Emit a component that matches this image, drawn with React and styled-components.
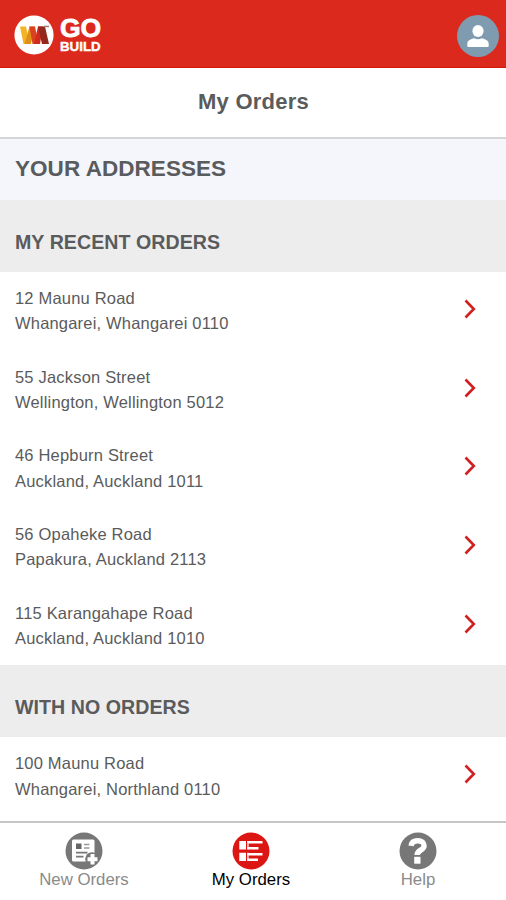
import React from "react";
import styled, { createGlobalStyle } from "styled-components";

const text = {
    title: "My Orders",
    heading: "YOUR ADDRESSES"
};

const sections = [
    {
        title: "MY RECENT ORDERS",
        addresses: [
            { street: "12 Maunu Road", city: "Whangarei, Whangarei 0110" },
            { street: "55 Jackson Street", city: "Wellington, Wellington 5012" },
            { street: "46 Hepburn Street", city: "Auckland, Auckland 1011" },
            { street: "56 Opaheke Road", city: "Papakura, Auckland 2113" },
            { street: "115 Karangahape Road", city: "Auckland, Auckland 1010" }
        ]
    },
    {
        title: "WITH NO ORDERS",
        addresses: [{ street: "100 Maunu Road", city: "Whangarei, Northland 0110" }]
    }
];

const Logo = () => (
    <svg width="40" height="40" viewBox="0 0 40 40">
        <circle cx="20" cy="20" r="19.6" fill="#fff" />
        <path d="M6 11.500h6L15.500 29H9.500z" fill="#f4b325" />
        <path d="M15.500 11.500h5L17 29h-6.500z" fill="#dd8f1a" />
        <path d="M15.500 11.500h5.500L24.500 29h-6z" fill="#d9411f" />
        <path d="M24 11.500h5L26 29h-6z" fill="#d12a1d" />
        <path d="M24 11.500h7L35 29h-7z" fill="#93281f" />
        <path d="M30 10.700h5v1.500h-5z" fill="#a07a76" />
    </svg>
);

const UserIcon = () => (
    <svg width="42" height="42" viewBox="0 0 42 42">
        <circle cx="21" cy="21" r="21" fill="#7f9bb0" />
        <ellipse cx="21" cy="16" rx="5.600" ry="6" fill="#fff" />
        <path d="M10.300 31v-2.300c0-3.600 3.700-4.700 7-5.500 2 1.500 5.400 1.500 7.400 0 3.300.8 7 1.900 7 5.500V31q0 1-1 1H11.300q-1 0-1-1z" fill="#fff" />
    </svg>
);

const Chevron = () => (
    <svg width="12" height="20" viewBox="0 0 12 20">
        <path d="M1.500 1.500 9.800 10 1.500 18.500" fill="none" stroke="#d0201f" strokeWidth="2.600" />
    </svg>
);

const NewOrdersIcon = () => (
    <svg width="38" height="38" viewBox="0 0 38 38">
        <circle cx="19" cy="19" r="18.500" fill="#777" />
        <rect x="7" y="7.500" width="22.500" height="22" rx="1.500" fill="#fff" />
        <rect x="11" y="11.500" width="5.500" height="5.500" fill="#666" />
        <path d="M19 12.500h5.500M19 16h5.500" stroke="#999" strokeWidth="1.600" />
        <path d="M11 20.700h11.500M11 24.700h7.500" stroke="#777" strokeWidth="1.700" />
        <circle cx="27" cy="27" r="6.800" fill="#777" />
        <path d="M27.500 22v10.500M22.500 27.200h10" stroke="#fff" strokeWidth="4" />
    </svg>
);

const MyOrdersIcon = () => (
    <svg width="38" height="38" viewBox="0 0 38 38">
        <circle cx="19" cy="19" r="18.500" fill="#dc1612" />
        <path d="M7.300 9h6.700v8.500H7.300zM7.300 20.800H14V29H7.300z" fill="#fff" />
        <path d="M15.300 9h1.300v8.500h-1.300zM15.300 20.800h1.300V29h-1.300z" fill="#fff" />
        <path d="M15.300 10.300h15.200M15.300 16.200h11.200M15.300 22.200h15.200M15.300 27.700h10.700" stroke="#fff" strokeWidth="2.600" />
    </svg>
);

const HelpIcon = () => (
    <svg width="38" height="38" viewBox="0 0 38 38">
        <circle cx="19" cy="19" r="18.500" fill="#777" />
        <path d="M12 13.800C12.600 10 15 8.800 18.800 8.800c4 0 6.300 2 6.300 4.900 0 4.600-7 4.300-7 9.300" fill="none" stroke="#fff" strokeWidth="5.400" />
        <path d="M15.200 24.800h6.300v6.900h-6.300z" fill="#fff" />
    </svg>
);

const tabs = [
    { label: "New Orders", Icon: NewOrdersIcon },
    { label: "My Orders", Icon: MyOrdersIcon, active: true },
    { label: "Help", Icon: HelpIcon }
];

const App = () => (
    <Page>
        <GlobalStyle />
        <Header>
            <Brand>
                <Logo />
                <BrandName>
                    <BrandTop>GO</BrandTop>
                    <BrandBottom>BUILD</BrandBottom>
                </BrandName>
            </Brand>
            <UserIcon />
        </Header>
        <Title>{text.title}</Title>
        <Content>
            <Heading>{text.heading}</Heading>
            {sections.map(section => (
                <section key={section.title}>
                    <SectionTitle>{section.title}</SectionTitle>
                    {section.addresses.map(address => (
                        <AddressRow key={address.street}>
                            <div>
                                <AddressLine>{address.street}</AddressLine>
                                <AddressLine>{address.city}</AddressLine>
                            </div>
                            <RowArrow>
                                <Chevron />
                            </RowArrow>
                        </AddressRow>
                    ))}
                </section>
            ))}
        </Content>
        <TabBar>
            {tabs.map(({ label, Icon, active }) => (
                <Tab key={label} $active={active}>
                    <Icon />
                    <span>{label}</span>
                </Tab>
            ))}
        </TabBar>
    </Page>
);

const GlobalStyle = createGlobalStyle`
    * {
        box-sizing: border-box;
    }

    body {
        margin: 0;
        background: #fff;
        font-family: "Liberation Sans", Arial, sans-serif;
    }

    svg {
        display: block;
        flex-shrink: 0;
    }
`;

const Page = styled.div`
    display: flex;
    flex-direction: column;
    height: 100vh;
    overflow: hidden;
    color: #5a5b5c;
`;

const Header = styled.header`
    display: flex;
    flex-shrink: 0;
    align-items: center;
    justify-content: space-between;
    height: 68px;
    padding: 4px 7px 0 14px;
    border-bottom: 1px solid #d3170f;
    background: #db291e;
`;

const Brand = styled.div`
    display: flex;
    align-items: center;
    gap: 6px;
    padding-bottom: 1px;
`;

const BrandName = styled.div`
    color: #fff;
    font-weight: bold;
`;

const BrandTop = styled.div`
    font-size: 26.5px;
    line-height: 23px;
    letter-spacing: -0.2px;
    -webkit-text-stroke: 0.8px #fff;
`;

const BrandBottom = styled.div`
    font-size: 13.3px;
    line-height: 13px;
    -webkit-text-stroke: 0.4px #fff;
`;

const Title = styled.h1`
    flex-shrink: 0;
    height: 71px;
    margin: 0;
    padding-left: 1px;
    border-bottom: 2px solid #d3d5d7;
    font-size: 22px;
    line-height: 67px;
    letter-spacing: 0.25px;
    text-align: center;
`;

const Content = styled.main`
    flex: 1;
    min-height: 0;
    overflow: hidden;
`;

const Heading = styled.h2`
    height: 61px;
    margin: 0;
    padding-left: 15px;
    background: #f4f6fb;
    font-size: 22.5px;
    line-height: 59px;
    letter-spacing: 0.05px;
`;

const SectionTitle = styled.h3`
    height: 72px;
    margin: 0;
    padding: 12px 0 0 15px;
    background: #ededed;
    font-size: 19.6px;
    line-height: 60px;
    letter-spacing: 0.05px;
`;

const AddressRow = styled.div`
    display: flex;
    align-items: center;
    justify-content: space-between;
    height: 78.7px;
    padding: 0 30px 0 15px;
`;

const AddressLine = styled.div`
    font-size: 16.5px;
    line-height: 25.3px;
    letter-spacing: 0.19px;
`;

const RowArrow = styled.div`
    padding-bottom: 5px;
`;

const TabBar = styled.nav`
    display: grid;
    flex-shrink: 0;
    grid-template-columns: repeat(3, 167px);
    height: 79px;
    padding-left: 0.5px;
    border-top: 2px solid #c6c6c6;
`;

const Tab = styled.div`
    display: flex;
    flex-direction: column;
    align-items: center;
    padding-top: 9px;
    color: ${p => (p.$active ? "#000" : "#8a8a8a")};
    font-size: 16.8px;
    line-height: 20px;
`;

export default App;
